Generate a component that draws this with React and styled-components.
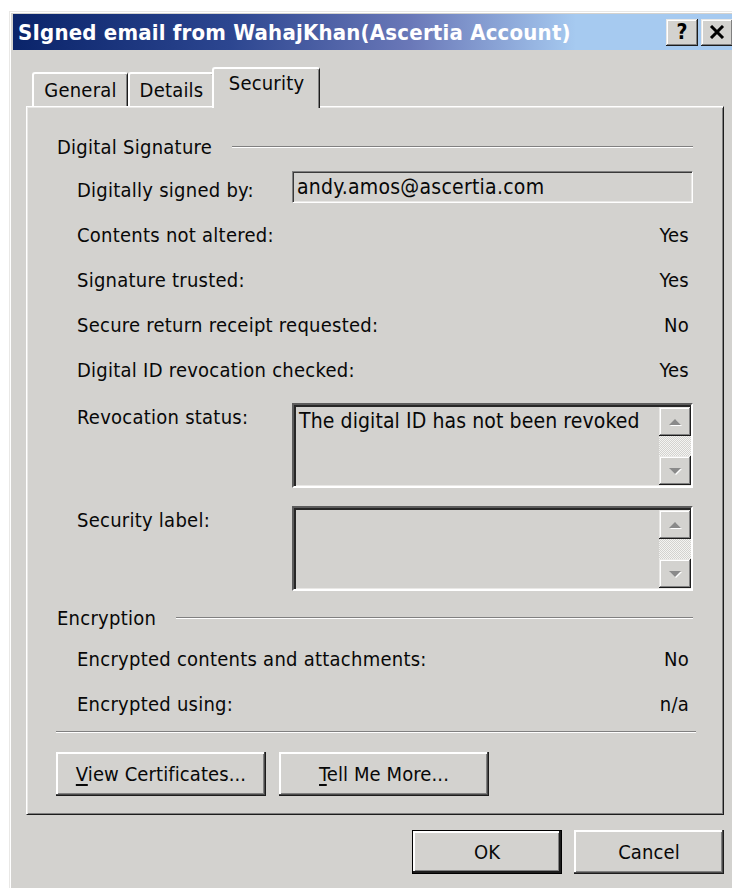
import React from 'react';
import styled, { createGlobalStyle, css } from 'styled-components';

const FACE = '#d3d2cf';
const HILITE = '#ffffff';
const LIGHT = '#e9e8e6';
const SHADOW = '#808080';

const GlobalStyle = createGlobalStyle`
  html, body {
    margin: 0;
    padding: 0;
    background: #ffffff;
    overflow: hidden;
  }
  body {
    font-family: "DejaVu Sans", "Liberation Sans", sans-serif;
    font-stretch: condensed;
    color: #080808;
  }
`;

const Window = styled.div`
  box-sizing: border-box;
  margin: 11px 0 0 9px;
  width: 730px;
  height: 890px;
  background: ${FACE};
  border-top: 1px solid ${LIGHT};
  border-left: 1px solid ${LIGHT};
  box-shadow: inset 1px 1px 0 ${HILITE};
  padding: 2px 4px 0 3px;
  display: flex;
  flex-direction: column;
`;

const TitleBar = styled.div`
  height: 36px;
  display: flex;
  align-items: center;
  padding: 0 2px 0 5px;
  background: linear-gradient(90deg, #0a246a 0%, #2c4690 30%, #6a78b8 55%, #a6caf0 78%, #a6caf0 100%);
`;

const Title = styled.span`
  color: #fff;
  font-weight: bold;
  font-size: 22px;
  letter-spacing: 0.2px;
  white-space: nowrap;
`;

const CaptionButtons = styled.div`
  margin-left: auto;
  display: flex;
  gap: 3px;
`;

const raised = css`
  background: ${FACE};
  box-shadow:
    inset -1px -1px 0 #1c1c1c,
    inset 1px 1px 0 ${LIGHT},
    inset -2px -2px 0 ${SHADOW},
    inset 2px 2px 0 ${HILITE};
`;

const CaptionButton = styled.div`
  ${raised};
  box-sizing: border-box;
  width: 32px;
  height: 27px;
  display: flex;
  align-items: center;
  justify-content: center;
  font-weight: bold;
  font-size: 21px;
  color: #000;
`;

const Body = styled.div`
  display: flex;
  flex-direction: column;
  padding: 0 11px 0 13px;
`;

const TabStrip = styled.div`
  margin-top: 17px;
  height: 39px;
  display: flex;
  align-items: flex-end;
  padding-left: 6px;
`;

const Tab = styled.div`
  position: relative;
  box-sizing: border-box;
  width: ${p => p.$w}px;
  height: ${p => (p.$active ? 41 : 34)}px;
  margin: ${p => (p.$active ? '0 -2px -2px -2px' : '0')};
  z-index: ${p => (p.$active ? 2 : 1)};
  padding-top: ${p => (p.$active ? 3 : 5)}px;
  text-align: center;
  font-size: 20px;
  letter-spacing: 0.2px;
  line-height: 22px;
  background: ${FACE};
  border-top: 2px solid ${HILITE};
  border-left: 2px solid ${HILITE};
  border-right: 1px solid #1c1c1c;
  border-radius: 3px 3px 0 0;
  box-shadow: inset -1px 0 0 ${SHADOW};
`;

const Panel = styled.div`
  box-sizing: border-box;
  display: flex;
  flex-direction: column;
  background: ${FACE};
  border-top: 1px solid ${HILITE};
  border-left: 1px solid ${HILITE};
  border-right: 1px solid #1c1c1c;
  border-bottom: 1px solid #1c1c1c;
  box-shadow: inset 1px 1px 0 ${LIGHT}, inset -1px -1px 0 ${SHADOW};
  padding: 25px 27px 18px 30px;
  letter-spacing: 0.25px;
`;

const SectionHeader = styled.div`
  height: 30px;
  display: flex;
  align-items: center;
  gap: 20px;
  font-size: 20px;
  margin-top: ${p => p.$top || 0}px;
  margin-bottom: ${p => p.$bottom || 0}px;
`;

const Etched = styled.div`
  flex: 1;
  height: 0;
  border-top: 1px solid ${SHADOW};
  border-bottom: 1px solid ${HILITE};
  margin-right: 3px;
`;

const Row = styled.div`
  height: 45px;
  display: flex;
  align-items: center;
  padding: 0 3px 0 20px;
  font-size: 20px;
`;

const Label = styled.span`
  width: 215px;
  flex-shrink: 0;
  white-space: nowrap;
`;

const Value = styled.span`
  margin-left: auto;
  padding-right: 4px;
`;

const Field = styled.div`
  flex: 1;
  box-sizing: border-box;
  height: 32px;
  margin-top: -5px;
  padding-left: 4px;
  font-size: 21px;
  line-height: 30px;
  white-space: nowrap;
  background: ${FACE};
  border-top: 1px solid ${SHADOW};
  border-left: 1px solid ${SHADOW};
  border-bottom: 1px solid ${HILITE};
  border-right: 1px solid ${HILITE};
  box-shadow: inset 1px 1px 0 #3a3a3a, inset -1px -1px 0 ${LIGHT};
`;

const BlockRow = styled.div`
  display: flex;
  align-items: flex-start;
  padding: 0 3px 0 20px;
  margin-top: ${p => p.$top}px;
  font-size: 20px;
`;

const BlockLabel = styled(Label)`
  line-height: 22px;
  margin-top: 3px;
`;

const ScrollBox = styled.div`
  flex: 1;
  box-sizing: border-box;
  height: 85px;
  display: flex;
  background: ${FACE};
  border-top: 2px solid #5c5c5c;
  border-left: 2px solid #5c5c5c;
  border-bottom: 2px solid ${HILITE};
  border-right: 2px solid ${HILITE};
  padding: 2px 0 0 2px;
  box-shadow: inset 2px 2px 0 #262626, inset -1px -1px 0 ${LIGHT};
`;

const ScrollText = styled.div`
  flex: 1;
  padding: 2px 4px 0 3px;
  font-size: 21px;
  letter-spacing: 0.1px;
  line-height: 24px;
  white-space: nowrap;
`;

const ScrollBar = styled.div`
  width: 32px;
  display: flex;
  flex-direction: column;
  padding-bottom: 1px;
`;

const ScrollButton = styled.div`
  ${raised};
  box-sizing: border-box;
  height: 29px;
  display: flex;
  align-items: center;
  justify-content: center;
`;

const ScrollTrack = styled.div`
  flex: 1;
  background-color: ${FACE};
  background-image: repeating-conic-gradient(#f4f4f2 0 25%, ${FACE} 0 50%);
  background-size: 2px 2px;
`;

const Separator = styled.div`
  margin: 5px 0 0 -1px;
  height: 0;
  border-top: 1px solid ${SHADOW};
  border-bottom: 1px solid ${HILITE};
`;

const ButtonRow = styled.div`
  display: flex;
  gap: ${p => p.$gap}px;
  justify-content: ${p => (p.$end ? 'flex-end' : 'flex-start')};
  margin: ${p => p.$margin};
`;

const Button = styled.div`
  box-sizing: border-box;
  width: ${p => p.$w}px;
  height: 44px;
  display: flex;
  align-items: center;
  justify-content: center;
  font-size: 20px;
  letter-spacing: 0.1px;
  color: #080808;
  background: ${FACE};
  box-shadow:
    inset -1px -1px 0 #1c1c1c,
    inset -2px -2px 0 #4a4a4a,
    inset 2px 2px 0 ${HILITE},
    inset -3px -3px 0 ${SHADOW};
  ${p => p.$default && css`
    border: 1px solid #000;
    box-shadow:
      inset -2px -2px 0 #1c1c1c,
      inset 1px 1px 0 ${HILITE},
      inset 2px 2px 0 ${HILITE},
      inset -3px -3px 0 ${SHADOW};
  `}
  u { text-underline-offset: 3px; }
`;

const CloseGlyph = () => (
  <svg width="16" height="14" viewBox="0 0 16 14">
    <path d="M2 1 L14 13 M14 1 L2 13" stroke="#000" strokeWidth="3" fill="none" />
  </svg>
);

const Arrow = ({ down }) => (
  <svg width="14" height="8" viewBox="0 0 14 8">
    {down ? (
      <>
        <path d="M1 1 L13 1 L7 7 Z" fill="#fff" transform="translate(1 1)" />
        <path d="M1 1 L13 1 L7 7 Z" fill="#8a8a8a" />
      </>
    ) : (
      <>
        <path d="M1 7 L13 7 L7 1 Z" fill="#fff" transform="translate(1 1)" />
        <path d="M1 7 L13 7 L7 1 Z" fill="#8a8a8a" />
      </>
    )}
  </svg>
);

const ScrollField = ({ text }) => (
  <ScrollBox>
    <ScrollText>{text}</ScrollText>
    <ScrollBar>
      <ScrollButton><Arrow /></ScrollButton>
      <ScrollTrack />
      <ScrollButton><Arrow down /></ScrollButton>
    </ScrollBar>
  </ScrollBox>
);

const signatureRows = [
  ['Contents not altered:', 'Yes'],
  ['Signature trusted:', 'Yes'],
  ['Secure return receipt requested:', 'No'],
  ['Digital ID revocation checked:', 'Yes'],
];

const encryptionRows = [
  ['Encrypted contents and attachments:', 'No'],
  ['Encrypted using:', 'n/a'],
];

export default function App() {
  return (
    <>
      <GlobalStyle />
      <Window>
        <TitleBar>
          <Title>SIgned email from WahajKhan(Ascertia Account)</Title>
          <CaptionButtons>
            <CaptionButton>?</CaptionButton>
            <CaptionButton><CloseGlyph /></CaptionButton>
          </CaptionButtons>
        </TitleBar>
        <Body>
          <TabStrip>
            <Tab $w={96}>General</Tab>
            <Tab $w={86}>Details</Tab>
            <Tab $w={108} $active>Security</Tab>
          </TabStrip>
          <Panel>
            <SectionHeader $bottom={5}>
              Digital Signature
              <Etched />
            </SectionHeader>
            <Row>
              <Label>Digitally signed by:</Label>
              <Field>andy.amos@ascertia.com</Field>
            </Row>
            {signatureRows.map(([label, value]) => (
              <Row key={label}>
                <Label>{label}</Label>
                <Value>{value}</Value>
              </Row>
            ))}
            <BlockRow $top={11}>
              <BlockLabel>Revocation status:</BlockLabel>
              <ScrollField text="The digital ID has not been revoked" />
            </BlockRow>
            <BlockRow $top={18}>
              <BlockLabel>Security label:</BlockLabel>
              <ScrollField text="" />
            </BlockRow>
            <SectionHeader $top={12} $bottom={3}>
              Encryption
              <Etched />
            </SectionHeader>
            {encryptionRows.map(([label, value]) => (
              <Row key={label}>
                <Label>{label}</Label>
                <Value>{value}</Value>
              </Row>
            ))}
            <Separator />
            <ButtonRow $gap={13} $margin="19px 0 0 -1px">
              <Button $w={210}><span><u>V</u>iew Certificates...</span></Button>
              <Button $w={210}><span><u>T</u>ell Me More...</span></Button>
            </ButtonRow>
          </Panel>
          <ButtonRow $gap={12} $end $margin="15px 0 0 0">
            <Button $w={150} $default>OK</Button>
            <Button $w={150}>Cancel</Button>
          </ButtonRow>
        </Body>
      </Window>
    </>
  );
}
